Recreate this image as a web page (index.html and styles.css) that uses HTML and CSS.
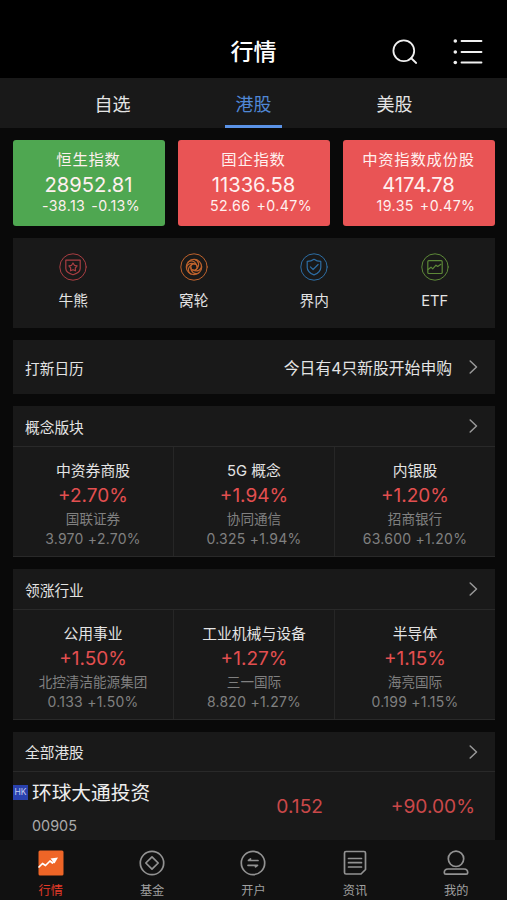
FILE: index.html
```html
<!DOCTYPE html>
<html lang="zh-CN">
<head>
	<meta charset="utf-8">
	<title>行情</title>
	<meta name="viewport" content="width=device-width,initial-scale=1.0">
	<link rel="stylesheet" href="styles.css">
</head>
<body>
<div class="wrapper">
	<div class="header">
		<h1>行情</h1>
		<div class="header_icons">
			<svg class="icon_search" viewBox="0 0 26 26"><circle cx="11.8" cy="11.8" r="10.4"/><path d="M19 19l5.2 5"/></svg>
			<svg class="icon_list" viewBox="0 0 30 28"><path d="M8.5 3h20M8.5 14h20M8.5 24.5h20"/><circle cx="2.3" cy="3" r="1.8"/><circle cx="2.3" cy="14" r="1.8"/><circle cx="2.3" cy="24.5" r="1.8"/></svg>
		</div>
	</div>
	<div class="tabs">
		<div class="tab">自选</div>
		<div class="tab active">港股</div>
		<div class="tab">美股</div>
	</div>

	<div class="content">
		<div class="index_grp">
			<div class="index down">
				<h4>恒生指数</h4>
				<p class="point">28952.81</p>
				<p class="change"><span>-38.13</span><span>-0.13%</span></p>
			</div>
			<div class="index">
				<h4>国企指数</h4>
				<p class="point">11336.58</p>
				<p class="change"><span>52.66</span><span>+0.47%</span></p>
			</div>
			<div class="index">
				<h4>中资指数成份股</h4>
				<p class="point">4174.78</p>
				<p class="change"><span>19.35</span><span>+0.47%</span></p>
			</div>
		</div>

		<div class="menu">
			<div class="menu_item">
				<svg class="bull" viewBox="0 0 28 28"><circle class="ring" cx="14" cy="14" r="13.2"/><path d="M6.8 7.2h14.4v8.3c0 3.2-3.2 5-7.2 6.3-4-1.3-7.2-3.1-7.2-6.3z"/><path d="M14 10l1.4 2.3 2.7.6-1.8 2.1.2 2.8-2.5-1.1-2.5 1.1.2-2.8-1.8-2.1 2.7-.6z"/></svg>
				<span>牛熊</span>
			</div>
			<div class="menu_item">
				<svg class="warrant" viewBox="0 0 28 28"><circle class="ring" cx="14" cy="14" r="13.2"/><circle cx="14" cy="14" r="7.7"/><circle cx="14" cy="14" r="3.2"/><path d="M8 9.3c3-2.5 7.5-2 9.2 4.7M14.8 6.4c4 1.6 5.8 6 .8 10.4M21.5 13c0 4-4 6.5-9.1 3.8M18.7 20c-3.8 1.7-8-.6-7.9-6M11.2 21.2C7.5 19.2 7 14.5 12.4 11.2M6.5 15.5C6.5 11.5 10 9 15.6 11.2"/></svg>
				<span>窝轮</span>
			</div>
			<div class="menu_item">
				<svg class="inner" viewBox="0 0 28 28"><circle class="ring" cx="14" cy="14" r="13.2"/><path d="M14 6.3c2 1.5 4.3 2.1 6.8 2.1v5.8c0 3.8-3 6.2-6.8 7.7-3.8-1.5-6.8-3.9-6.8-7.7V8.4c2.5 0 4.8-.6 6.8-2.1z"/><path d="M10.4 13.8l2.7 2.7 5-5"/></svg>
				<span>界内</span>
			</div>
			<div class="menu_item">
				<svg class="etf" viewBox="0 0 28 28"><circle class="ring" cx="14" cy="14" r="13.2"/><rect x="6.8" y="7.7" width="14.4" height="12.8" rx="1"/><path d="M7 16.5l3-2.3 1.7 1.7 3.3-3.7 1.7 1.3 3.2-2.2"/></svg>
				<span>ETF</span>
			</div>
		</div>

		<div class="calendar">
			<span>打新日历</span>
			<span class="notice">今日有4只新股开始申购</span>
			<svg class="arrow" viewBox="0 0 9 14"><path d="M1.2 1l6.3 6-6.3 6"/></svg>
		</div>

		<div class="section">
			<div class="section_header">
				<span>概念版块</span>
				<svg class="arrow" viewBox="0 0 9 14"><path d="M1.2 1l6.3 6-6.3 6"/></svg>
			</div>
			<div class="section_body">
				<div class="plate">
					<h4>中资券商股</h4>
					<p class="rate">+2.70%</p>
					<p class="stock">国联证券</p>
					<p class="price">3.970 +2.70%</p>
				</div>
				<div class="plate">
					<h4>5G 概念</h4>
					<p class="rate">+1.94%</p>
					<p class="stock">协同通信</p>
					<p class="price">0.325 +1.94%</p>
				</div>
				<div class="plate">
					<h4>内银股</h4>
					<p class="rate">+1.20%</p>
					<p class="stock">招商银行</p>
					<p class="price">63.600 +1.20%</p>
				</div>
			</div>
		</div>

		<div class="section">
			<div class="section_header">
				<span>领涨行业</span>
				<svg class="arrow" viewBox="0 0 9 14"><path d="M1.2 1l6.3 6-6.3 6"/></svg>
			</div>
			<div class="section_body">
				<div class="plate">
					<h4>公用事业</h4>
					<p class="rate">+1.50%</p>
					<p class="stock">北控清洁能源集团</p>
					<p class="price">0.133 +1.50%</p>
				</div>
				<div class="plate">
					<h4>工业机械与设备</h4>
					<p class="rate">+1.27%</p>
					<p class="stock">三一国际</p>
					<p class="price">8.820 +1.27%</p>
				</div>
				<div class="plate">
					<h4>半导体</h4>
					<p class="rate">+1.15%</p>
					<p class="stock">海亮国际</p>
					<p class="price">0.199 +1.15%</p>
				</div>
			</div>
		</div>

		<div class="section all">
			<div class="section_header">
				<span>全部港股</span>
				<svg class="arrow" viewBox="0 0 9 14"><path d="M1.2 1l6.3 6-6.3 6"/></svg>
			</div>
			<div class="stock_row">
				<span class="market">HK</span>
				<div class="stock_name">
					<h3>环球大通投资</h3>
					<p>00905</p>
				</div>
				<span class="stock_price">0.152</span>
				<span class="stock_rate">+90.00%</span>
			</div>
		</div>
	</div>

	<div class="footer">
		<div class="nav active">
			<svg viewBox="0 0 26 26"><rect class="nav_bg" x=".5" y=".5" width="25" height="25" rx="1.5"/><path class="nav_line" d="M1 17l3.500-3.500 3 2 4.500-4.500 2.500 2 2.500-3"/><path class="nav_head" d="M12.500 8.500l7.500-1-3.500 6z"/></svg>
			<span>行情</span>
		</div>
		<div class="nav">
			<svg viewBox="0 0 26 26"><circle cx="13" cy="13" r="11.7"/><path d="M13 6.800l6.200 6.200-6.200 6.200L6.800 13z"/></svg>
			<span>基金</span>
		</div>
		<div class="nav">
			<svg viewBox="0 0 26 26"><circle cx="13" cy="13" r="11.7"/><path d="M18 10.500H8.500l2-1.500M8 15.300h9.500l-2 1.500"/></svg>
			<span>开户</span>
		</div>
		<div class="nav">
			<svg viewBox="0 0 26 26"><path d="M4 1.500h18a1.500 1.500 0 0 1 1.500 1.500v16.500l-4.500 4.500H4A1.500 1.500 0 0 1 2.500 22.500V3A1.500 1.500 0 0 1 4 1.500zM6.500 8.500h13M6.500 12.700h13M6.500 17h13"/></svg>
			<span>资讯</span>
		</div>
		<div class="nav">
			<svg viewBox="0 0 26 26"><circle cx="13" cy="8.8" r="7.7"/><path d="M5 19h16c2.300 0 3.700 1.500 3.700 3.700 0 1-.5 1.500-1.500 1.500H2.800c-1 0-1.500-.5-1.500-1.500C1.300 20.500 2.700 19 5 19z"/></svg>
			<span>我的</span>
		</div>
	</div>
</div>
</body>
</html>
```
FILE: styles.css
```css
*{margin: 0;padding: 0;box-sizing: border-box;font-family: Inter,"Noto Sans CJK SC",sans-serif;}
body{background: #090909;color: #e4e4e4;}
h1,h3,h4{font-weight: normal;}
svg{display: block;fill: none;stroke-linecap: round;stroke-linejoin: round;}
.wrapper{width: 100%;height: 100vh;display: grid;grid-template-rows: 78px 50px 712px 60px;overflow: hidden;white-space: nowrap;}

.header{background: #000;display: grid;grid-template-columns: 1fr auto 1fr;align-items: center;padding: 26px 24px 0 24px;}
.header h1{grid-column: 2;font-size: 23px;font-weight: 500;line-height: 30px;color: #fff;}
.header_icons{display: flex;justify-content: flex-end;align-items: center;gap: 35px;stroke: #f0f0f0;}
.icon_search{width: 26px;height: 26px;stroke-width: 1.8;}
.icon_list{width: 30px;height: 28px;stroke-width: 1.8;}
.icon_list circle{fill: #f0f0f0;stroke: none;}

.tabs{background: #191919;display: flex;justify-content: center;gap: 84px;}
.tab{width: 57px;height: 50px;line-height: 53px;font-size: 18px;text-align: center;border-bottom: 3px solid transparent;}
.tab.active{color: #5087d5;border-color: #5a92e6;}

.content{padding: 12px 12px 0 13px;display: flex;flex-direction: column;gap: 12px;overflow: hidden;}
.index_grp{display: grid;grid-template-columns: repeat(3,1fr);gap: 13px;height: 86px;}
.index{background: #e95455;border-radius: 3px;color: #fff0ef;text-align: center;padding-top: 9px;}
.index.down{background: #4fa751;}
.index h4{font-size: 15.3px;letter-spacing: .8px;line-height: 22px;margin-right: 1px;}
.point{font-size: 20.2px;line-height: 27px;margin-right: 1px;}
.change{font-size: 14.2px;line-height: 16px;display: flex;justify-content: center;gap: 6px;padding-left: 14px;letter-spacing: .4px;}
.down .change{padding-left: 4px;}

.menu{background: #191919;height: 90px;display: grid;grid-template-columns: repeat(4,1fr);}
.menu_item{display: flex;flex-direction: column;align-items: center;padding-top: 15px;}
.menu_item svg{width: 28px;height: 28px;stroke-width: 1.2;}
.menu_item .ring{stroke-width: 1;}
.menu_item span{font-size: 14.7px;line-height: 22px;margin-top: 9px;}
.bull{stroke: #a83e42;}
.warrant{stroke: #bd622c;}
.inner{stroke: #2d6da3;}
.etf{stroke: #5d8838;}

.arrow{width: 9px;height: 14px;stroke: #999;stroke-width: 1.5;}
.calendar{background: #191919;height: 54px;display: flex;align-items: center;padding: 0 17px 0 12px;font-size: 14.7px;}
.notice{margin-left: auto;margin-right: 17px;font-size: 15.8px;}

.section{background: #191919;height: 151px;}
.section_header{height: 41px;display: flex;justify-content: space-between;align-items: center;padding: 0 17px 0 12px;font-size: 14.7px;border-bottom: 1px solid #292929;}
.section_body{display: grid;grid-template-columns: 160px 161px auto;height: 110px;border-bottom: 1px solid #292929;}
.plate{text-align: center;padding-top: 13px;border-left: 1px solid #262626;}
.plate:first-child{border: none;}
.plate h4{font-size: 14.8px;line-height: 22px;}
.rate{font-size: 19px;line-height: 28px;color: #e34f50;}
.stock{font-size: 13.6px;line-height: 19px;color: #808080;}
.price{font-size: 14px;letter-spacing: .25px;line-height: 20px;color: #808080;}

.all{height: 108px;}
.all .section_header{height: 40px;}
.stock_row{height: 68px;display: flex;}
.market{width: 15px;height: 15px;margin-top: 13px;background: #2941ae;color: #c3cbed;font-size: 8.5px;line-height: 15px;text-align: center;}
.stock_name{width: 180px;padding: 5px 0 0 4px;}
.stock_name h3{font-size: 19.7px;line-height: 32px;color: #eee;}
.stock_name p{font-size: 14.4px;line-height: 20px;margin-top: 7px;color: #aaa;}
.stock_price,.stock_rate{font-size: 19.2px;line-height: 69px;color: #ca4849;}
.stock_price{width: 115px;text-align: right;}
.stock_rate{margin-left: auto;margin-right: 20px;}

.footer{background: #111;display: grid;grid-template-columns: repeat(5,1fr);}
.nav{display: flex;flex-direction: column;align-items: center;padding-top: 10px;color: #a0a0a0;}
.nav svg{width: 26px;height: 26px;stroke: #929292;stroke-width: 1.7;}
.nav span{font-size: 12.2px;line-height: 18px;margin-top: 6px;}
.nav.active{color: #e43b29;}
.nav .nav_bg{fill: #ee6527;stroke: none;}
.nav .nav_line{stroke: #fff;}
.nav .nav_head{fill: #fff;stroke: none;}
```
